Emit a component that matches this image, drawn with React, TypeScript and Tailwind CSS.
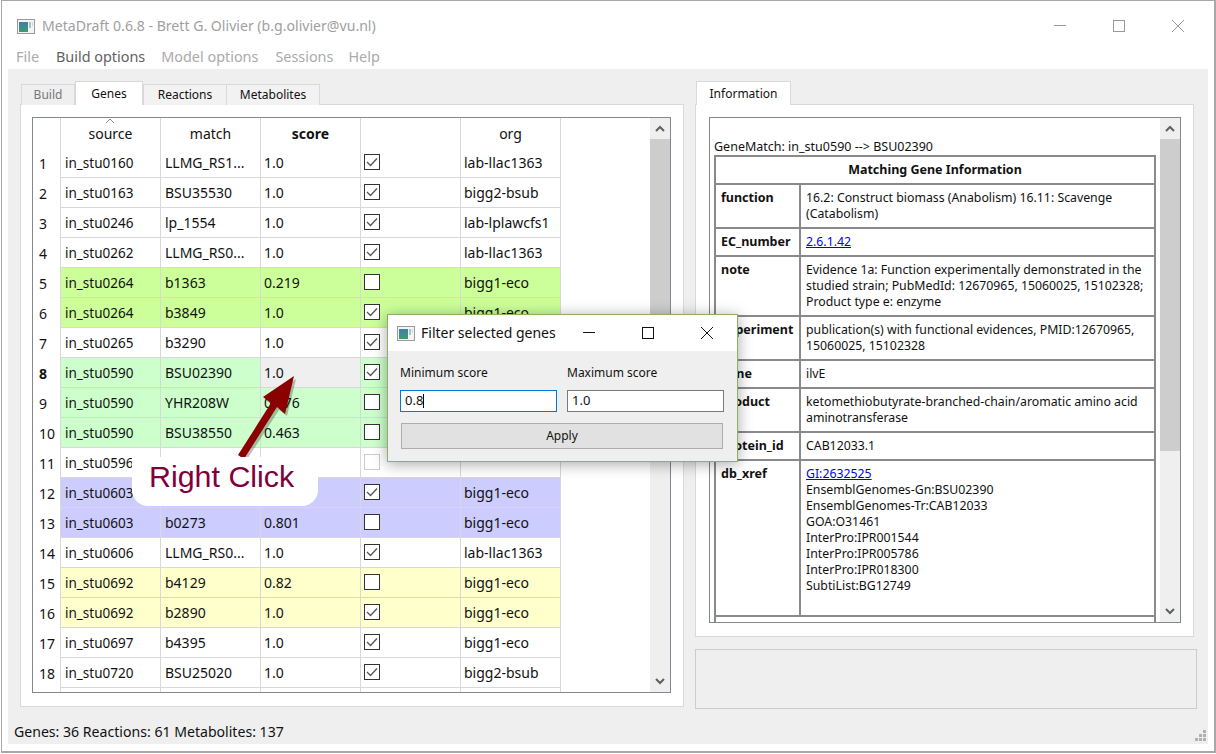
import { ReactNode } from 'react';

const GREENYELLOW = 'bg-[#ccff99]';
const GREEN = 'bg-[#ccffcc]';
const BLUE = 'bg-[#ccccff]';
const YELLOW = 'bg-[#ffffcc]';

type Row = { source: string; match: string; score: string; on: boolean; org: string; bg?: string; dim?: boolean };

const rows: Row[] = [
  { source: 'in_stu0160', match: 'LLMG_RS1...', score: '1.0', on: true, org: 'lab-llac1363' },
  { source: 'in_stu0163', match: 'BSU35530', score: '1.0', on: true, org: 'bigg2-bsub' },
  { source: 'in_stu0246', match: 'lp_1554', score: '1.0', on: true, org: 'lab-lplawcfs1' },
  { source: 'in_stu0262', match: 'LLMG_RS0...', score: '1.0', on: true, org: 'lab-llac1363' },
  { source: 'in_stu0264', match: 'b1363', score: '0.219', on: false, org: 'bigg1-eco', bg: GREENYELLOW },
  { source: 'in_stu0264', match: 'b3849', score: '1.0', on: true, org: 'bigg1-eco', bg: GREENYELLOW },
  { source: 'in_stu0265', match: 'b3290', score: '1.0', on: true, org: 'bigg1-eco' },
  { source: 'in_stu0590', match: 'BSU02390', score: '1.0', on: true, org: 'bigg2-bsub', bg: GREEN },
  { source: 'in_stu0590', match: 'YHR208W', score: '0.176', on: false, org: 'bigg1-sce', bg: GREEN },
  { source: 'in_stu0590', match: 'BSU38550', score: '0.463', on: false, org: 'bigg2-bsub', bg: GREEN },
  { source: 'in_stu0596', match: '', score: '', on: false, org: '', dim: true },
  { source: 'in_stu0603', match: 'b0273', score: '1.0', on: true, org: 'bigg1-eco', bg: BLUE },
  { source: 'in_stu0603', match: 'b0273', score: '0.801', on: false, org: 'bigg1-eco', bg: BLUE },
  { source: 'in_stu0606', match: 'LLMG_RS0...', score: '1.0', on: true, org: 'lab-llac1363' },
  { source: 'in_stu0692', match: 'b4129', score: '0.82', on: false, org: 'bigg1-eco', bg: YELLOW },
  { source: 'in_stu0692', match: 'b2890', score: '1.0', on: true, org: 'bigg1-eco', bg: YELLOW },
  { source: 'in_stu0697', match: 'b4395', score: '1.0', on: true, org: 'bigg1-eco' },
  { source: 'in_stu0720', match: 'BSU25020', score: '1.0', on: true, org: 'bigg2-bsub' },
];

function AppIcon() {
  return (
    <svg width="18" height="15" viewBox="0 0 18 15" className="shrink-0">
      <defs>
        <linearGradient id="appicon" x1="0" y1="0" x2="0" y2="1">
          <stop offset="0" stopColor="#3f7fa8" />
          <stop offset="1" stopColor="#3f9a70" />
        </linearGradient>
      </defs>
      <rect x="0.5" y="0.5" width="17" height="14" fill="#f4f4f4" stroke="#9a9a9a" />
      <rect x="2" y="3" width="9" height="10" fill="url(#appicon)" />
      <rect x="12" y="3" width="2" height="6" fill="#a8c4c0" />
      <rect x="15" y="3" width="1" height="4" fill="#c8d8d8" />
    </svg>
  );
}

function WinButtons({ color, width }: { color: string; width: string }) {
  return (
    <>
      <div className={`flex justify-center ${width}`}>
        <svg width="12" height="12" viewBox="0 0 12 12"><path d="M0 5.5H12" stroke={color} /></svg>
      </div>
      <div className={`flex justify-center ${width}`}>
        <svg width="12" height="12" viewBox="0 0 12 12"><rect x="0.5" y="0.5" width="11" height="11" fill="none" stroke={color} /></svg>
      </div>
      <div className={`flex justify-center ${width}`}>
        <svg width="12" height="12" viewBox="0 0 12 12"><path d="M0 0L12 12M12 0L0 12" stroke={color} /></svg>
      </div>
    </>
  );
}

function Check({ on, dim }: { on: boolean; dim?: boolean }) {
  return (
    <div className={`mb-px flex h-4 w-4 items-center justify-center border bg-white ${dim ? 'border-[#cccccc]' : 'border-[#333333]'}`}>
      {on && (
        <svg width="12" height="10" viewBox="0 0 12 10">
          <path d="M1 5L4.5 8.5L11 1.5" fill="none" stroke="#555555" strokeWidth="1.3" />
        </svg>
      )}
    </div>
  );
}

function ScrollBar({ thumb }: { thumb: string }) {
  return (
    <div className="flex w-5 shrink-0 flex-col bg-[#efefef]">
      <div className="flex h-[21px] shrink-0 items-center justify-center">
        <svg width="10" height="7" viewBox="0 0 10 7"><path d="M1 6L5 2L9 6" fill="none" stroke="#606060" strokeWidth="2" /></svg>
      </div>
      <div className={`shrink-0 bg-[#cdcdcd] ${thumb}`} />
      <div className="mt-auto flex h-[21px] shrink-0 items-center justify-center">
        <svg width="10" height="7" viewBox="0 0 10 7"><path d="M1 1L5 5L9 1" fill="none" stroke="#606060" strokeWidth="2" /></svg>
      </div>
    </div>
  );
}

function Cell({ children, className = 'pl-[3px]' }: { children?: ReactNode; className?: string }) {
  return (
    <div className={`flex h-full w-[100px] shrink-0 items-center overflow-hidden whitespace-nowrap border-r border-[#d8d8d8] ${className}`}>
      {children}
    </div>
  );
}

function GeneTable() {
  return (
    <div className="flex h-[576px] w-[639px] border border-[#828790] bg-white">
      <div className="h-full flex-1 overflow-hidden text-[14px] text-[#111111]">
        <div className="flex h-[30px] items-center">
          <div className="h-full w-[28px] shrink-0 border-r border-[#d8d8d8]" />
          {['source', 'match', 'score', '', 'org'].map((h, i) => (
            <div key={i} className={`relative flex h-full w-[100px] shrink-0 items-center justify-center border-r border-[#d8d8d8] ${h === 'score' ? 'font-bold' : ''}`}>
              {h === 'source' && (
                <svg width="10" height="5" viewBox="0 0 10 5" className="absolute left-[44px] top-0"><path d="M1 5L5 1L9 5" fill="none" stroke="#888888" /></svg>
              )}
              {h}
            </div>
          ))}
        </div>
        {rows.map((r, i) => (
          <div key={i} className="flex h-[30px] items-center">
            <div className={`flex h-full w-[28px] shrink-0 items-center border-r border-[#d8d8d8] pl-[6px] ${i === 7 ? 'font-bold' : ''}`}>{i + 1}</div>
            <div className={`flex h-full border-b border-[#d8d8d8] ${r.bg ?? ''}`}>
              <Cell className="pl-1 pt-px text-[13.5px]">{r.source}</Cell>
              <Cell className="pl-1">{r.match}</Cell>
              <Cell className={`pl-[3px] ${i === 7 ? 'bg-[#efefef]' : ''}`}>{r.score}</Cell>
              <Cell><Check on={r.on} dim={r.dim} /></Cell>
              <Cell>{r.org}</Cell>
            </div>
          </div>
        ))}
        <div className="flex h-[30px]">
          <div className="h-full w-[28px] shrink-0 border-r border-[#d8d8d8]" />
          <Cell /><Cell /><Cell /><Cell /><Cell />
        </div>
      </div>
      <ScrollBar thumb="h-[312px]" />
    </div>
  );
}

function Info({ name, children }: { name: string; children: ReactNode }) {
  return (
    <tr>
      <td className="border-2 border-[#8a8a8a] py-[5px] pl-[5px] align-top font-bold">{name}</td>
      <td className="border-2 border-[#8a8a8a] py-[5px] pl-[5px] pr-1 align-top text-[12.3px]">{children}</td>
    </tr>
  );
}

function InfoPanel() {
  return (
    <div className="flex h-[506px] w-[472px] border border-[#828790] bg-white">
      <div className="h-full flex-1 overflow-hidden pl-1 pt-[21px] text-[12.5px] leading-4 text-[#111111]">
        <div>GeneMatch: in_stu0590 --&gt; BSU02390</div>
        <table className="w-[442px] table-fixed border-collapse">
          <colgroup>
            <col className="w-[85px]" />
            <col />
          </colgroup>
          <tbody>
            <tr>
              <td colSpan={2} className="border-2 border-[#8a8a8a] py-[5px] text-center font-bold">Matching Gene Information</td>
            </tr>
            <Info name="function">16.2: Construct biomass (Anabolism) 16.11: Scavenge (Catabolism)</Info>
            <Info name="EC_number"><span className="text-[#0000ee] underline">2.6.1.42</span></Info>
            <Info name="note">Evidence 1a: Function experimentally demonstrated in the studied strain; PubMedId: 12670965, 15060025, 15102328; Product type e: enzyme</Info>
            <Info name="experiment">publication(s) with functional evidences, PMID:12670965, 15060025, 15102328</Info>
            <Info name="gene">ilvE</Info>
            <Info name="product">ketomethiobutyrate-branched-chain/aromatic amino acid aminotransferase</Info>
            <Info name="protein_id">CAB12033.1</Info>
            <Info name="db_xref">
              <div className="h-[144px]">
                <span className="text-[#0000ee] underline">GI:2632525</span>
                <div>EnsemblGenomes-Gn:BSU02390</div>
                <div>EnsemblGenomes-Tr:CAB12033</div>
                <div>GOA:O31461</div>
                <div>InterPro:IPR001544</div>
                <div>InterPro:IPR005786</div>
                <div>InterPro:IPR018300</div>
                <div>SubtiList:BG12749</div>
              </div>
            </Info>
            <tr>
              <td colSpan={2} className="h-[40px] border-2 border-[#8a8a8a]" />
            </tr>
          </tbody>
        </table>
      </div>
      <ScrollBar thumb="h-[312px]" />
    </div>
  );
}

function FilterDialog() {
  return (
    <div className="absolute left-[387px] top-[314px] w-[351px] border border-[#8eb060] bg-[#efefef] text-[12px] text-[#111111] shadow-[0_2px_14px_rgba(0,0,0,0.35)]">
      <div className="flex h-[36px] items-center bg-white pl-[9px] pr-px">
        <AppIcon />
        <span className="mb-[2px] ml-[6px] text-[14px]">Filter selected genes</span>
        <div className="ml-auto flex"><WinButtons color="#111111" width="w-[59px]" /></div>
      </div>
      <div className="px-[12px] pb-[12px] pt-[13px]">
        <div className="flex gap-[10px]">
          <label className="w-[157px]">
            <div className="leading-[18px]">Minimum score</div>
            <div className="mt-[8px] flex h-[22px] items-center border border-[#0078d7] bg-white pl-1 text-[13px]">
              0.8<span className="h-[14px] w-px bg-black" />
            </div>
          </label>
          <label className="w-[157px]">
            <div className="leading-[18px]">Maximum score</div>
            <div className="mt-[8px] flex h-[22px] items-center border border-[#7a7a7a] bg-white pl-1 text-[13px]">1.0</div>
          </label>
        </div>
        <div className="ml-px mt-[11px] flex h-[26px] w-[322px] items-center justify-center border border-[#adadad] bg-[#e1e1e1]">Apply</div>
      </div>
    </div>
  );
}

export default function App() {
  return (
    <div className="relative h-[754px] w-[1216px] overflow-hidden bg-white pl-px font-['Noto_Sans',sans-serif]">
      <div className="flex h-[753px] w-[1215px] flex-col border-b-2 border-l border-r-2 border-t border-[#a8a8a8] bg-white">
        <div className="flex h-[43px] shrink-0 items-center pl-[15px] pt-[7px]">
          <AppIcon />
          <span className="ml-[7px] text-[14.1px] text-[#a0a0a0]">MetaDraft 0.6.8 - Brett G. Olivier (b.g.olivier@vu.nl)</span>
          <div className="ml-auto mr-[7px] flex"><WinButtons color="#999999" width="w-[59px]" /></div>
        </div>
        <div className="flex h-[25px] shrink-0 items-start pl-[14px] pt-[2px] text-[14.4px] text-[#aaaaaa]">
          <span className="mr-[17px]">File</span>
          <span className="mr-[16px] text-[#5f5f5f]">Build options</span>
          <span className="mr-[17px]">Model options</span>
          <span className="mr-[15px]">Sessions</span>
          <span>Help</span>
        </div>
        <div className="mx-[6px] mb-[7px] flex flex-1 flex-col bg-[#efefef] text-[#111111]">
          <div className="flex gap-[11px] pl-3 pt-3">
            <div className="w-[664px]">
              <div className="relative z-10 -mb-px flex h-[24px] items-end pl-px text-[12px]">
                <div className="flex h-[21px] w-[54px] items-center justify-center border border-b-0 border-[#d9d9d9] bg-[#efefef] text-[#777777]">Build</div>
                <div className="flex h-[24px] w-[68px] items-center justify-center border border-b-0 border-[#d9d9d9] bg-white">Genes</div>
                <div className="flex h-[21px] w-[84px] items-center justify-center border border-b-0 border-[#d9d9d9] bg-[#f2f2f2]">Reactions</div>
                <div className="flex h-[21px] w-[93px] items-center justify-center border border-b-0 border-l-0 border-[#d9d9d9] bg-[#f2f2f2]">Metabolites</div>
              </div>
              <div className="h-[603px] border border-[#d9d9d9] bg-white pl-[11px] pt-3">
                <GeneTable />
              </div>
            </div>
            <div className="w-[502px]">
              <div className="relative z-10 -mb-px flex h-[24px] items-end pl-px text-[12px]">
                <div className="flex h-[24px] w-[95px] items-center justify-center border border-b-0 border-[#d9d9d9] bg-white">Information</div>
              </div>
              <div className="h-[533px] w-[499px] border border-[#d9d9d9] bg-white pl-[13px] pt-3">
                <InfoPanel />
              </div>
              <div className="mt-3 h-[60px] border border-[#cccccc]" />
            </div>
          </div>
          <div className="flex flex-1 items-end justify-between pb-[2px] pl-[6px] pr-[2px] text-[14.1px]">
            <span>Genes: 36 Reactions: 61 Metabolites: 137</span>
            <svg width="11" height="11" viewBox="0 0 11 11" className="mb-px" fill="#b0b0b0">
              <rect x="8" y="0" width="3" height="3" />
              <rect x="4" y="4" width="3" height="3" />
              <rect x="8" y="4" width="3" height="3" />
              <rect x="0" y="8" width="3" height="3" />
              <rect x="4" y="8" width="3" height="3" />
              <rect x="8" y="8" width="3" height="3" />
            </svg>
          </div>
        </div>
      </div>

      <FilterDialog />

      <svg width="1216" height="754" className="pointer-events-none absolute left-0 top-0">
        <polygon points="296,379 287,416 279,410 246,461 240,457 273,405 265,400" fill="#000000" opacity="0.25" />
        <polygon points="294,376 285,414 277,407 244,459 238,455 271,403 263,397" fill="#8b0000" />
      </svg>

      <div className="absolute left-[132px] top-[457px] flex h-[49px] w-[186px] items-center rounded-b-[16px] bg-white pb-[9px] pl-[17px] font-['Liberation_Sans',sans-serif] text-[30.4px] text-[#80003c]">
        Right Click
      </div>
    </div>
  );
}
